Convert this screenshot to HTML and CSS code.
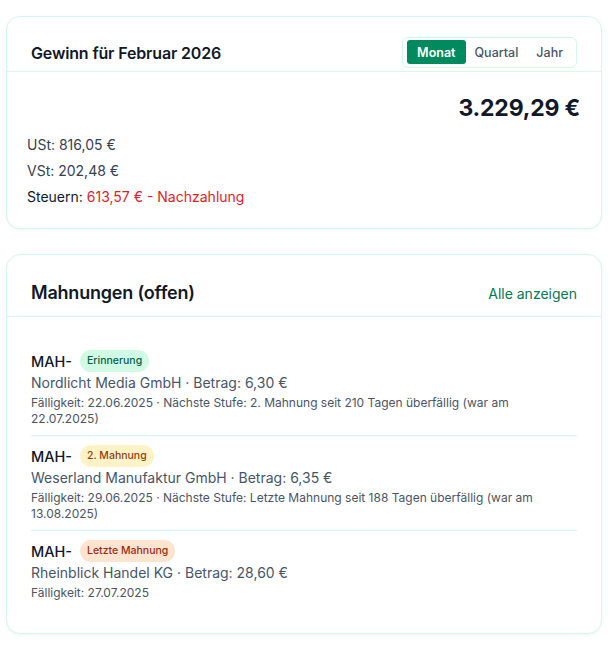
FILE: index.html
```html
<!DOCTYPE html>
<html lang="de">
<head>
  <meta charset="UTF-8">
  <meta name="viewport" content="width=device-width, initial-scale=1.0">
  <title>Dashboard</title>
  <link rel="stylesheet" href="styles.css">
</head>
<body>
  <div class="card">
    <div class="card-head">
      <h2 class="card-title">Gewinn für Februar 2026</h2>
      <div class="toggle">
        <button class="toggle-btn active">Monat</button>
        <button class="toggle-btn">Quartal</button>
        <button class="toggle-btn">Jahr</button>
      </div>
    </div>
    <div class="card-body profit">
      <div class="profit-total">3.229,29 €</div>
      <div class="tax-line">USt: 816,05 €</div>
      <div class="tax-line">VSt: 202,48 €</div>
      <div class="tax-line tax-sum">Steuern: <span class="due">613,57 € - Nachzahlung</span></div>
    </div>
  </div>

  <div class="card">
    <div class="card-head tall">
      <h2 class="card-title big">Mahnungen (offen)</h2>
      <a class="link" href="#">Alle anzeigen</a>
    </div>
    <div class="card-body">
      <div class="reminder">
        <div class="reminder-top">
          <span class="ref">MAH-</span>
          <span class="badge level-1">Erinnerung</span>
        </div>
        <div class="reminder-info">Nordlicht Media GmbH · Betrag: 6,30 €</div>
        <div class="reminder-meta">Fälligkeit: 22.06.2025 · Nächste Stufe: 2. Mahnung seit 210 Tagen überfällig (war am 22.07.2025)</div>
      </div>
      <div class="reminder">
        <div class="reminder-top">
          <span class="ref">MAH-</span>
          <span class="badge level-2">2. Mahnung</span>
        </div>
        <div class="reminder-info">Weserland Manufaktur GmbH · Betrag: 6,35 €</div>
        <div class="reminder-meta">Fälligkeit: 29.06.2025 · Nächste Stufe: Letzte Mahnung seit 188 Tagen überfällig (war am 13.08.2025)</div>
      </div>
      <div class="reminder">
        <div class="reminder-top">
          <span class="ref">MAH-</span>
          <span class="badge level-3">Letzte Mahnung</span>
        </div>
        <div class="reminder-info">Rheinblick Handel KG · Betrag: 28,60 €</div>
        <div class="reminder-meta">Fälligkeit: 27.07.2025</div>
      </div>
    </div>
  </div>
</body>
</html>
```

FILE: styles.css
```css
body {
  margin: 0;
  padding: 16px 8px 0 6px;
  font-family: Inter, "Noto Sans", sans-serif;
  background: #fff;
  color: #111827;
}
.card {
  border: 1px solid #d5f8e8;
  border-radius: 14px;
  background: #fff;
  box-shadow: 0 1px 3px rgba(16, 80, 60, 0.06);
  margin-bottom: 25px;
}
.card-head {
  display: flex;
  justify-content: space-between;
  align-items: center;
  padding: 20px 24px 3px;
  border-bottom: 1px solid #d9f7ea;
}
.card-head.tall {
  padding: 24px 24px 9px;
}
.card-title {
  margin: 0;
  font-size: 16px;
  line-height: 24px;
  font-weight: 600;
  letter-spacing: -0.15px;
  color: #111827;
}
.card-title.big {
  font-size: 18px;
  line-height: 28px;
  letter-spacing: -0.2px;
}
.toggle {
  display: flex;
  padding: 2px 4px 3px;
  border: 1px solid #d5f8e8;
  border-radius: 6px;
}
.toggle-btn {
  font-family: inherit;
  font-size: 12.5px;
  font-weight: 500;
  height: 24px;
  padding: 0 9px;
  border: 0;
  border-radius: 3px;
  background: none;
  color: #4b5563;
}
.toggle-btn.active {
  background: #018a5d;
  color: #fff;
  font-weight: 600;
  padding: 0 10px;
}
.card-body {
  padding: 24px;
}
.profit {
  padding: 24px 21px 18px 20px;
}
.profit-total {
  text-align: right;
  font-size: 23px;
  line-height: 24px;
  font-weight: 700;
  letter-spacing: -0.2px;
  color: #111827;
  margin-bottom: 12px;
}
.tax-line {
  font-size: 14px;
  line-height: 26px;
  color: #374151;
}
.tax-sum {
  color: #111827;
}
.due {
  color: #e11d2a;
}
.link {
  font-size: 14px;
  color: #047857;
  text-decoration: none;
}
.reminder {
  padding: 8px 0;
  border-bottom: 1px solid #d9f7ea;
}
.reminder:last-child {
  border-bottom: 0;
}
.reminder-top {
  display: flex;
  align-items: center;
  gap: 8px;
  height: 24px;
}
.ref {
  font-size: 14.5px;
  font-weight: 500;
  color: #111827;
}
.badge {
  font-size: 10.5px;
  font-weight: 500;
  line-height: 22px;
  padding: 0 7px;
  border-radius: 999px;
}
.level-1 {
  background: #d1fae5;
  color: #065f46;
}
.level-2 {
  background: #fef3c7;
  color: #92400e;
}
.level-3 {
  background: #ffe4d0;
  color: #9a2a12;
}
.reminder-info {
  font-size: 14px;
  line-height: 20px;
  color: #475569;
}
.reminder-meta {
  margin-top: 2px;
  font-size: 12px;
  line-height: 16px;
  color: #4b5563;
}
```
